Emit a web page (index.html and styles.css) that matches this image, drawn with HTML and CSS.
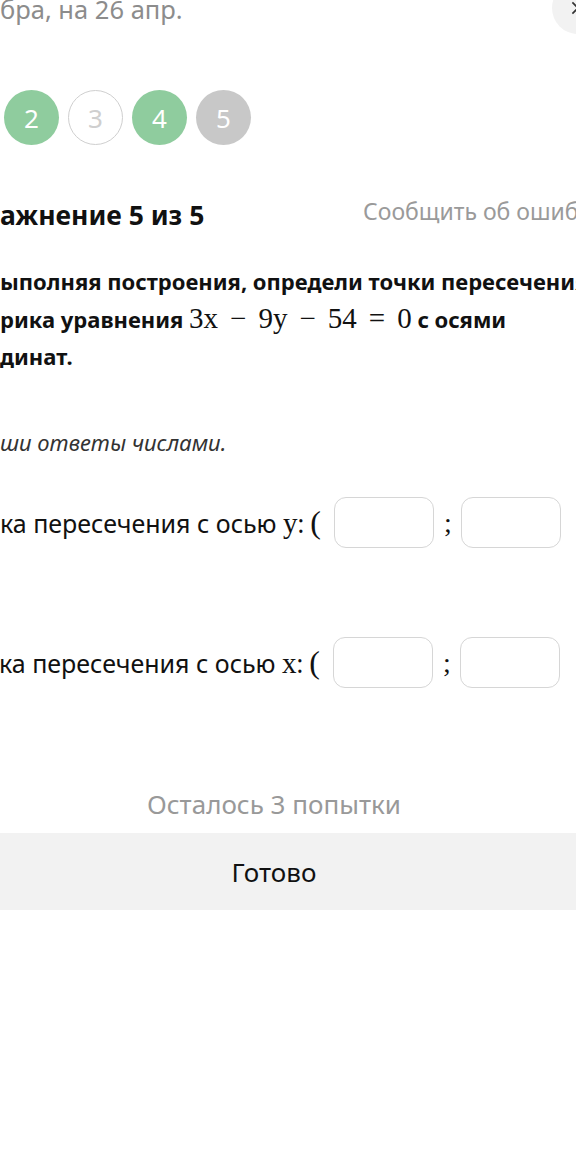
FILE: index.html
```html
<!DOCTYPE html>
<html lang="ru">
<head>
<meta charset="utf-8">
<link rel="stylesheet" href="styles.css">
</head>
<body>
<div class="page">
  <div class="top">
    <div class="due">бра, на 26 апр.</div>
    <div class="close"><svg viewBox="0 0 20 20" width="16" height="16"><path d="M3 3 L17 17 M17 3 L3 17" stroke="#333" stroke-width="2" fill="none"/></svg></div>
  </div>
  <div class="steps">
    <span class="step done">2</span>
    <span class="step empty">3</span>
    <span class="step done">4</span>
    <span class="step current">5</span>
  </div>
  <div class="head">
    <h1 class="title">ажнение 5 из 5</h1>
    <span class="report">Сообщить об ошибке</span>
  </div>
  <p class="question">ыполняя построения, определи точки пересечения<br>рика уравнения <span class="math"><span class="tok">3x</span><span class="op">−</span><span class="tok">9y</span><span class="op">−</span><span class="tok">54</span><span class="rel">=</span><span class="tok">0</span></span> с осями<br>динат.</p>
  <p class="hint">ши ответы числами.</p>
  <div class="answer">
    <span class="label">ка пересечения с осью <span class="mvar">y</span>:<span class="paren">(</span></span>
    <span class="box"></span><span class="semi">;</span><span class="box"></span>
  </div>
  <div class="answer second">
    <span class="label">ка пересечения с осью <span class="mvar">x</span>:<span class="paren">(</span></span>
    <span class="box"></span><span class="semi">;</span><span class="box"></span>
  </div>
  <div class="attempts">Осталось 3 попытки</div>
  <div class="done-btn">Готово</div>
</div>
</body>
</html>
```
FILE: styles.css
```css
html, body {
  margin: 0;
  padding: 0;
  background: #fff;
  overflow: hidden;
}
body {
  font-family: "Noto Sans", "Open Sans", sans-serif;
  color: #111;
}
.page {
  margin-top: -9px;
  width: 576px;
}
.top {
  display: flex;
  justify-content: space-between;
  align-items: flex-start;
  height: 36px;
}
.due {
  font-size: 25.5px;
  line-height: 36px;
  color: #8c8c8c;
  white-space: nowrap;
}
.close {
  flex: none;
  width: 52px;
  height: 52px;
  border-radius: 50%;
  background: #f2f2f2;
  display: flex;
  align-items: center;
  justify-content: center;
  margin: -9px -28px 0 0;
}
.steps {
  display: flex;
  gap: 9px;
  padding-left: 4px;
  margin-top: 63px;
}
.step {
  width: 55px;
  height: 55px;
  border-radius: 50%;
  display: flex;
  align-items: center;
  justify-content: center;
  font-size: 26px;
  color: #fff;
  box-sizing: border-box;
}
.step.done { background: #8fcc9e; }
.step.empty { background: #fff; border: 1px solid #cfcfcf; color: #cfcfcf; }
.step.current { background: #c8c8c8; }
.head {
  display: flex;
  justify-content: space-between;
  align-items: center;
  margin-top: 48px;
}
.title {
  margin: 0;
  font-size: 26.5px;
  font-weight: 700;
  line-height: 36px;
  white-space: nowrap;
}
.report {
  font-size: 23px;
  line-height: 36px;
  color: #9a9a9a;
  white-space: nowrap;
  margin: 0 -40px 7px 0;
  width: 253px;
}
.question {
  margin: 27px 0 0 0;
  font-size: 22px;
  font-weight: 700;
  line-height: 37px;
  white-space: nowrap;
}
.math {
  font-family: "Liberation Serif", "DejaVu Serif", serif;
  font-weight: 400;
  font-size: 29px;
}
.op, .rel {
  margin: 0 12px;
}
.hint {
  margin: 52px 0 0 0;
  font-size: 22px;
  line-height: 30px;
  font-style: italic;
  color: #333;
  white-space: nowrap;
}
.answer {
  display: flex;
  align-items: center;
  margin-top: 40px;
}
.answer.second { margin-top: 89px; }
.label {
  font-size: 25px;
  white-space: nowrap;
}
.mvar {
  font-family: "Liberation Serif", "DejaVu Serif", serif;
  font-size: 29px;
}
.paren {
  font-family: "Liberation Serif", "DejaVu Serif", serif;
  font-size: 32px;
  margin: 0 13px 0 6px;
}
.box {
  flex: none;
  width: 100px;
  height: 51px;
  border: 1px solid #d6d6d6;
  border-radius: 12px;
  box-sizing: border-box;
}
.answer.second .label { margin-left: -1px; }
.semi {
  font-family: "Liberation Serif", serif;
  font-size: 28px;
  margin: 0 9px 0 10px;
}
.attempts {
  text-align: center;
  font-size: 26px;
  line-height: 36px;
  color: #999;
  margin: 98px -4px 0 -32px;
}
.done-btn {
  margin-top: 11px;
  height: 77px;
  background: #f2f2f2;
  display: flex;
  align-items: center;
  justify-content: center;
  font-size: 26px;
  color: #111;
  padding-right: 28px;
}
```
